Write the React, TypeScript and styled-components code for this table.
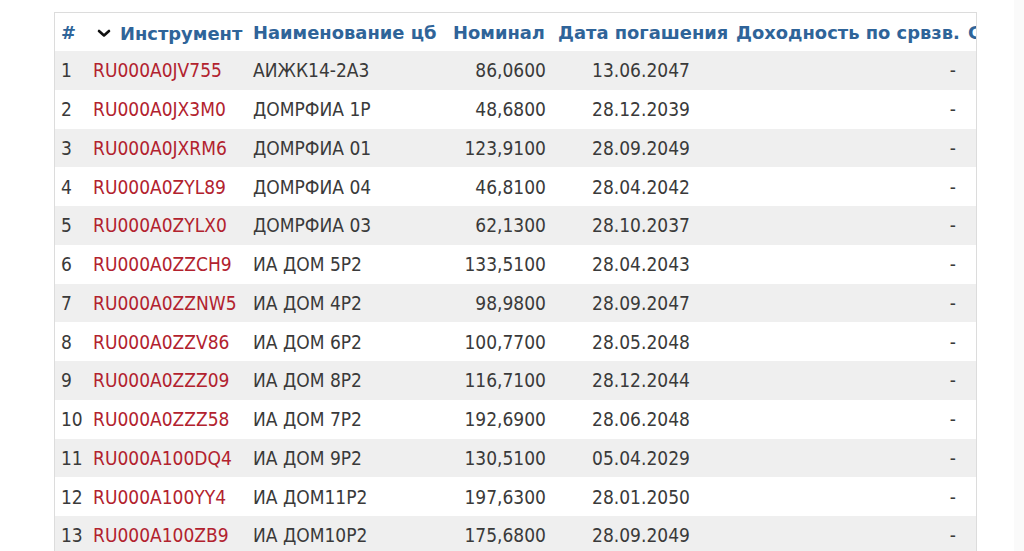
import React from "react";
import styled, { createGlobalStyle } from "styled-components";

const Global = createGlobalStyle`
  html, body { margin: 0; padding: 0; background: #ffffff; }
  body { font-family: "DejaVu Sans Condensed", "DejaVu Sans", sans-serif; }
`;

const Page = styled.div`
  display: flex;
  width: 1024px;
  height: 551px;
  overflow: hidden;
`;

const Main = styled.div`
  flex: 1;
  padding: 12px 0 0 54px;
`;

const Side = styled.div`
  width: 10px;
  background: #fafafa;
`;

const Frame = styled.div`
  width: 923px;
  box-sizing: border-box;
  border: 1px solid #dcdcdc;
  border-bottom: none;
  overflow: hidden;
`;

const Table = styled.table`
  border-collapse: collapse;
  table-layout: fixed;
  width: 1100px;
  font-size: 19px;
  color: #3a3a3a;
`;

const Th = styled.th<{ $align?: string }>`
  height: 38px;
  padding: 0 6px;
  text-align: ${(p) => p.$align || "left"};
  color: #2f6499;
  font-family: "DejaVu Sans", sans-serif;
  font-size: 17.9px;
  font-weight: bold;
  white-space: nowrap;
  overflow: visible;
`;

const Row = styled.tr<{ $odd: boolean }>`
  height: 38.75px;
  background: ${(p) => (p.$odd ? "#efefef" : "#ffffff")};
`;

const Td = styled.td<{ $align?: string; $red?: boolean }>`
  padding: 0 6px;
  text-align: ${(p) => p.$align || "left"};
  color: ${(p) => (p.$red ? "#b2222e" : "#3a3a3a")};
  white-space: nowrap;
  overflow: hidden;
`;

const SortHead = styled.span`
  display: inline-flex;
  align-items: center;
  gap: 9px;
  padding-left: 4px;
`;

const Chevron = () => (
  <svg width="14" height="9" viewBox="0 0 14 9">
    <path d="M2 2 L7 6.5 L12 2" fill="none" stroke="#111" strokeWidth="2.6" strokeLinecap="round" strokeLinejoin="round" />
  </svg>
);

const rows = [
  ["RU000A0JV755", "АИЖК14-2А3", "86,0600", "13.06.2047"],
  ["RU000A0JX3M0", "ДОМРФИА 1Р", "48,6800", "28.12.2039"],
  ["RU000A0JXRM6", "ДОМРФИА 01", "123,9100", "28.09.2049"],
  ["RU000A0ZYL89", "ДОМРФИА 04", "46,8100", "28.04.2042"],
  ["RU000A0ZYLX0", "ДОМРФИА 03", "62,1300", "28.10.2037"],
  ["RU000A0ZZCH9", "ИА ДОМ 5Р2", "133,5100", "28.04.2043"],
  ["RU000A0ZZNW5", "ИА ДОМ 4Р2", "98,9800", "28.09.2047"],
  ["RU000A0ZZV86", "ИА ДОМ 6Р2", "100,7700", "28.05.2048"],
  ["RU000A0ZZZ09", "ИА ДОМ 8Р2", "116,7100", "28.12.2044"],
  ["RU000A0ZZZ58", "ИА ДОМ 7Р2", "192,6900", "28.06.2048"],
  ["RU000A100DQ4", "ИА ДОМ 9Р2", "130,5100", "05.04.2029"],
  ["RU000A100YY4", "ИА ДОМ11Р2", "197,6300", "28.01.2050"],
  ["RU000A100ZB9", "ИА ДОМ10Р2", "175,6800", "28.09.2049"],
];

export default function App() {
  return (
    <>
      <Global />
      <Page>
        <Main>
          <Frame>
            <Table>
              <colgroup>
                <col style={{ width: 32 }} />
                <col style={{ width: 160 }} />
                <col style={{ width: 200 }} />
                <col style={{ width: 105 }} />
                <col style={{ width: 178 }} />
                <col style={{ width: 232 }} />
                <col style={{ width: 193 }} />
              </colgroup>
              <thead>
                <tr>
                  <Th>#</Th>
                  <Th>
                    <SortHead>
                      <Chevron />
                      Инструмент
                    </SortHead>
                  </Th>
                  <Th>Наименование цб</Th>
                  <Th>Номинал</Th>
                  <Th>Дата погашения</Th>
                  <Th>Доходность по срвзв.</Th>
                  <Th>Срок</Th>
                </tr>
              </thead>
              <tbody>
                {rows.map((r, i) => (
                  <Row key={r[0]} $odd={i % 2 === 0}>
                    <Td>{i + 1}</Td>
                    <Td $red>{r[0]}</Td>
                    <Td>{r[1]}</Td>
                    <Td $align="right">{r[2]}</Td>
                    <Td $align="center">{r[3]}</Td>
                    <Td $align="right">-</Td>
                    <Td></Td>
                  </Row>
                ))}
              </tbody>
            </Table>
          </Frame>
        </Main>
        <Side />
      </Page>
    </>
  );
}
